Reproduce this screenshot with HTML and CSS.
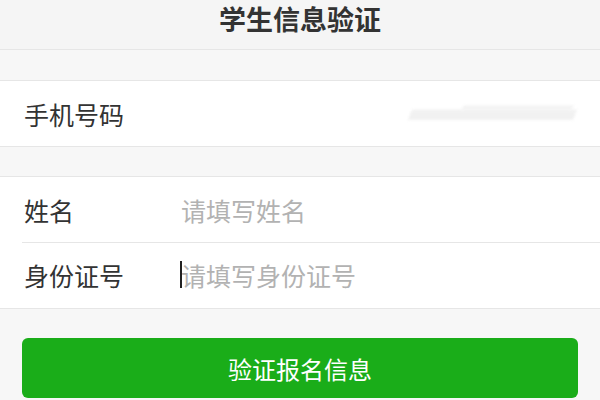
FILE: index.html
```html
<!DOCTYPE html>
<html lang="zh-CN">
<head>
<meta charset="utf-8">
<title>学生信息验证</title>
<link rel="stylesheet" href="styles.css">
</head>
<body>
<header class="topbar"><h1 class="title">学生信息验证</h1></header>
<section class="group first">
  <div class="row">
    <div class="label">手机号码</div>
    <div class="value"><span class="smudge"></span></div>
  </div>
</section>
<section class="group second">
  <div class="row">
    <div class="label">姓名</div>
    <div class="field placeholder">请填写姓名</div>
  </div>
  <div class="row divided">
    <div class="label">身份证号</div>
    <div class="field placeholder focused">请填写身份证号</div>
  </div>
</section>
<div class="actions"><button class="btn">验证报名信息</button></div>
</body>
</html>
```
FILE: styles.css
```css
* { box-sizing: border-box; }
html, body { margin: 0; padding: 0; }
body {
  width: 600px;
  height: 400px;
  overflow: hidden;
  background: #f7f7f7;
  font-family: "Noto Sans CJK SC", "Noto Sans", sans-serif;
  color: #333;
}
.topbar {
  height: 50px;
  background: #f5f5f5;
  border-bottom: 1px solid #e6e6e6;
}
.title {
  margin: 0;
  font-size: 27px;
  font-weight: 700;
  line-height: 38px;
  text-align: center;
  color: #333;
}
.group {
  background: #fff;
  border-top: 1px solid #e6e6e6;
  border-bottom: 1px solid #e6e6e6;
}
.group.first { margin-top: 30px; }
.group.second { margin-top: 29px; }
.row {
  display: flex;
  align-items: center;
  height: 65px;
  padding-left: 24px;
}
.row.divided {
  height: 66px;
  position: relative;
}
.row.divided::before {
  content: "";
  position: absolute;
  left: 22px;
  right: 0;
  top: 0;
  border-top: 1px solid #e6e6e6;
}
.label {
  width: 157px;
  font-size: 25px;
  color: #333;
  flex: none;
}
.value {
  flex: 1;
  display: flex;
  justify-content: flex-end;
  padding-right: 24px;
}
.smudge {
  display: block;
  width: 165px;
  height: 22px;
  margin-top: -4px;
  background:
    linear-gradient(to bottom, transparent 0, transparent 20%, #efefef 20%, #f0f0f0 35%, transparent 35%) no-repeat 50px 0 / 110px 100%,
    linear-gradient(to bottom, transparent 40%, #f2f2f2 40%, #f0f0f0 85%, transparent 85%) no-repeat 0 0 / 100% 100%;
  filter: blur(1.5px);
  transform: skewX(-20deg);
}
.field {
  font-size: 25px;
  flex: 1;
}
.placeholder { color: #b2b2b2; }
.focused {
  position: relative;
}
.focused::before {
  content: "";
  position: absolute;
  left: -1px;
  top: 4px;
  height: 27px;
  border-left: 2px solid #222;
}
.actions {
  padding: 29px 22px 0 22px;
}
.btn {
  display: block;
  width: 556px;
  height: 60px;
  border: none;
  border-radius: 6px;
  background: #1aad19;
  color: #fff;
  font-family: "Noto Sans CJK SC", "Noto Sans", sans-serif;
  font-size: 24px;
  padding: 0;
}
```
